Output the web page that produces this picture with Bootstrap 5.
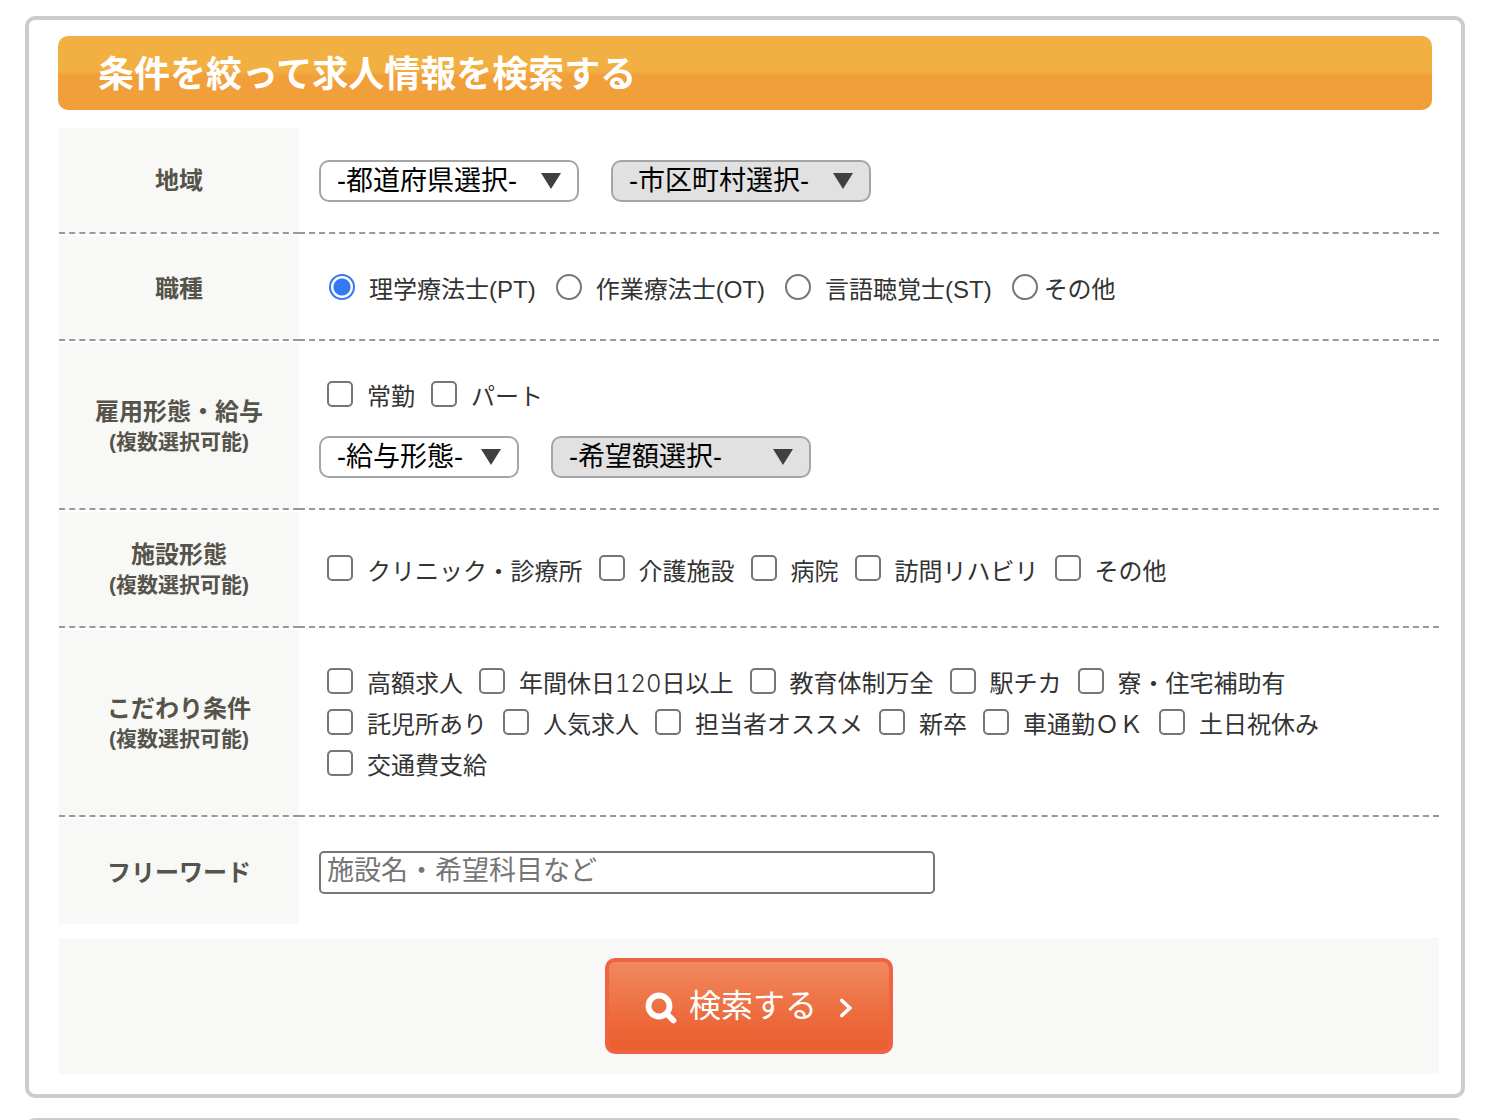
<!DOCTYPE html>
<html lang="ja">
<head>
<meta charset="utf-8">
<meta name="viewport" content="width=device-width, initial-scale=1">
<title>求人情報検索</title>
<link href="https://cdn.jsdelivr.net/npm/bootstrap@5.3.0/dist/css/bootstrap.min.css" rel="stylesheet">
<style>
  body { font-family: "Liberation Sans", "Noto Sans CJK JP", sans-serif; font-size: 24px; color: #333; background: #fff; }
  .page { height: 100vh; padding: 16px 27px 0 25px; gap: 20px; }
  .panel { border: 4px solid #ccc; border-radius: 10px; }
  .panel-search { padding: 16px 22px 20px 30px; }
  .panel-title { margin: 0 7px 18px -1px; padding: 3px 40px 0; font-size: 36px; line-height: 71px; border-radius: 10px;
    background: linear-gradient(#f3b042 0 46%, #f19f3a 54%); }
  .texture { background: repeating-conic-gradient(#f6f6f4 0 25%, #fafaf8 0 50%) 0 0 / 4px 4px; }
  .cond-list { gap: 2px; }
  .cond-tall { min-height: 116px; }
  .cond:not(:last-child) > * { border-bottom: 2px dashed #999; }
  .cond-head { width: 240px; padding-top: 2px; font-size: 24px; line-height: 30px; color: #55534a; }
  .cond-head small { font-size: 21px; font-weight: 700; }
  .cond-body { padding: 32px 20px 30px; }
  .cond-body-choices { padding: 30px 20px 32px; }
  .cond-body-mixed { padding: 30px 20px; gap: 22px; }
  .select-pair { gap: 32px; }
  .choices { column-gap: 16px; padding-left: 8px; }
  .choices-radio { column-gap: 20px; padding-left: 10px; }
  .choice { gap: 14px; line-height: 41px; }
  .choice-tight { gap: 6px; }
  .choice .form-check-input { width: 26px; height: 26px; margin: 0; border: 2px solid #767676; background-color: #fff; }
  .choice .form-check-input[type=checkbox] { border-radius: 5px; }
  .choice .form-check-input[type=radio]:checked { border-color: #3478f6; background-image: radial-gradient(circle, #3478f6 0 8px, #fff 9px); }
  .choice label { padding-top: 3px; margin-bottom: -3px; }
  .num { font-family: Inter, sans-serif; font-weight: 300; font-variant-numeric: tabular-nums; }
  .cond-select { width: 260px; height: 42px; padding: 0 50px 0 16px; font-size: 27px; line-height: 36px; color: #000;
    border: 2px solid #a5a5a5; border-radius: 10px;
    background: #fff url("data:image/svg+xml,%3Csvg xmlns='http://www.w3.org/2000/svg' viewBox='0 0 20 16'%3E%3Cpath d='M0 0h20L10 16z' fill='%23404040'/%3E%3C/svg%3E") no-repeat right 16px center / 20px 16px; }
  .cond-select:disabled { background-color: #e1e1e1; color: #000; opacity: 1; }
  .cond-select-sm { width: 200px; padding-right: 40px; }
  .keyword { width: 616px; height: 43px; padding: 0 6px 2px; font-size: 27px; line-height: 36px; border: 2px solid #767676; border-radius: 5px; }
  .keyword::placeholder { color: #757575; opacity: 1; }
  .submit-area { margin-top: 14px; padding: 20px; }
  .btn-search { width: 288px; height: 96px; font-size: 32px; color: #fff; border: 4px solid #ee6245; border-radius: 10px;
    background: linear-gradient(#f0895d, #ec6335 80%, #ea5f30); }
  .btn-search:hover { color: #fff; border-color: #ee6245; }
  .btn-search span { margin: 0 22px 0 12px; line-height: 48px; }
  .btn-search svg { margin-top: 3px; }
</style>
<script src="https://cdn.jsdelivr.net/npm/bootstrap@5.3.0/dist/js/bootstrap.bundle.min.js"></script>
</head>
<body>
<main class="page d-flex flex-column overflow-hidden">
  <form class="panel panel-search flex-shrink-0" onsubmit="return false">
    <h1 class="panel-title text-white fw-bold">条件を絞って求人情報を検索する</h1>

    <div class="cond-list d-flex flex-column">
      <div class="cond d-flex">
        <div class="cond-head texture fw-bold flex-shrink-0 d-flex flex-column align-items-center justify-content-center">地域</div>
        <div class="cond-body flex-grow-1 d-flex align-items-center">
          <div class="select-pair d-flex flex-wrap">
            <select class="form-select cond-select" aria-label="都道府県"><option>-都道府県選択-</option></select>
            <select class="form-select cond-select" aria-label="市区町村" disabled><option>-市区町村選択-</option></select>
          </div>
        </div>
      </div>

      <div class="cond d-flex" role="radiogroup" aria-labelledby="h-job">
        <div id="h-job" class="cond-head texture fw-bold flex-shrink-0 d-flex flex-column align-items-center justify-content-center">職種</div>
        <div class="cond-body-choices flex-grow-1 d-flex align-items-center">
          <div class="choices choices-radio d-flex flex-wrap">
            <div class="choice d-flex align-items-center"><input class="form-check-input" type="radio" name="job" id="j1" checked><label for="j1">理学療法士(PT)</label></div>
            <div class="choice d-flex align-items-center"><input class="form-check-input" type="radio" name="job" id="j2"><label for="j2">作業療法士(OT)</label></div>
            <div class="choice d-flex align-items-center"><input class="form-check-input" type="radio" name="job" id="j3"><label for="j3">言語聴覚士(ST)</label></div>
            <div class="choice choice-tight d-flex align-items-center"><input class="form-check-input" type="radio" name="job" id="j4"><label for="j4">その他</label></div>
          </div>
        </div>
      </div>

      <div class="cond d-flex" role="group" aria-labelledby="h-emp">
        <div id="h-emp" class="cond-head texture fw-bold flex-shrink-0 d-flex flex-column align-items-center justify-content-center">雇用形態・給与<small>(複数選択可能)</small></div>
        <div class="cond-body-mixed flex-grow-1 d-flex flex-column justify-content-center">
          <div class="choices d-flex flex-wrap">
            <div class="choice d-flex align-items-center"><input class="form-check-input" type="checkbox" id="e1"><label for="e1">常勤</label></div>
            <div class="choice d-flex align-items-center"><input class="form-check-input" type="checkbox" id="e2"><label for="e2">パート</label></div>
          </div>
          <div class="select-pair d-flex flex-wrap">
            <select class="form-select cond-select cond-select-sm" aria-label="給与形態"><option>-給与形態-</option></select>
            <select class="form-select cond-select" aria-label="希望額" disabled><option>-希望額選択-</option></select>
          </div>
        </div>
      </div>

      <div class="cond cond-tall d-flex" role="group" aria-labelledby="h-fac">
        <div id="h-fac" class="cond-head texture fw-bold flex-shrink-0 d-flex flex-column align-items-center justify-content-center">施設形態<small>(複数選択可能)</small></div>
        <div class="cond-body-choices flex-grow-1 d-flex align-items-center">
          <div class="choices d-flex flex-wrap">
            <div class="choice d-flex align-items-center"><input class="form-check-input" type="checkbox" id="f1"><label for="f1">クリニック・診療所</label></div>
            <div class="choice d-flex align-items-center"><input class="form-check-input" type="checkbox" id="f2"><label for="f2">介護施設</label></div>
            <div class="choice d-flex align-items-center"><input class="form-check-input" type="checkbox" id="f3"><label for="f3">病院</label></div>
            <div class="choice d-flex align-items-center"><input class="form-check-input" type="checkbox" id="f4"><label for="f4">訪問リハビリ</label></div>
            <div class="choice d-flex align-items-center"><input class="form-check-input" type="checkbox" id="f5"><label for="f5">その他</label></div>
          </div>
        </div>
      </div>

      <div class="cond d-flex" role="group" aria-labelledby="h-opt">
        <div id="h-opt" class="cond-head texture fw-bold flex-shrink-0 d-flex flex-column align-items-center justify-content-center">こだわり条件<small>(複数選択可能)</small></div>
        <div class="cond-body-choices flex-grow-1 d-flex align-items-center">
          <div class="choices d-flex flex-wrap">
            <div class="choice d-flex align-items-center"><input class="form-check-input" type="checkbox" id="o1"><label for="o1">高額求人</label></div>
            <div class="choice d-flex align-items-center"><input class="form-check-input" type="checkbox" id="o2"><label for="o2">年間休日<span class="num">120</span>日以上</label></div>
            <div class="choice d-flex align-items-center"><input class="form-check-input" type="checkbox" id="o3"><label for="o3">教育体制万全</label></div>
            <div class="choice d-flex align-items-center"><input class="form-check-input" type="checkbox" id="o4"><label for="o4">駅チカ</label></div>
            <div class="choice d-flex align-items-center"><input class="form-check-input" type="checkbox" id="o5"><label for="o5">寮・住宅補助有</label></div>
            <div class="choice d-flex align-items-center"><input class="form-check-input" type="checkbox" id="o6"><label for="o6">託児所あり</label></div>
            <div class="choice d-flex align-items-center"><input class="form-check-input" type="checkbox" id="o7"><label for="o7">人気求人</label></div>
            <div class="choice d-flex align-items-center"><input class="form-check-input" type="checkbox" id="o8"><label for="o8">担当者オススメ</label></div>
            <div class="choice d-flex align-items-center"><input class="form-check-input" type="checkbox" id="o9"><label for="o9">新卒</label></div>
            <div class="choice d-flex align-items-center"><input class="form-check-input" type="checkbox" id="o10"><label for="o10">車通勤ＯＫ</label></div>
            <div class="choice d-flex align-items-center"><input class="form-check-input" type="checkbox" id="o11"><label for="o11">土日祝休み</label></div>
            <div class="choice d-flex align-items-center"><input class="form-check-input" type="checkbox" id="o12"><label for="o12">交通費支給</label></div>
          </div>
        </div>
      </div>

      <div class="cond d-flex">
        <label for="keyword" class="cond-head texture fw-bold flex-shrink-0 d-flex flex-column align-items-center justify-content-center">フリーワード</label>
        <div class="cond-body flex-grow-1 d-flex align-items-center">
          <input type="text" class="form-control keyword" id="keyword" placeholder="施設名・希望科目など">
        </div>
      </div>
    </div>

    <div class="submit-area texture d-flex justify-content-center">
      <button type="submit" class="btn btn-search d-flex align-items-center justify-content-center p-0">
        <svg width="32" height="32" viewBox="0 0 32 32" fill="none" stroke="#fff" stroke-linecap="round" aria-hidden="true"><circle cx="14" cy="14" r="10.5" stroke-width="5.8"/><path d="M22 22l6.500 6.500" stroke-width="5.8"/></svg>
        <span>検索する</span>
        <svg width="14" height="20" viewBox="0 0 14 20" fill="none" stroke="#fff" stroke-width="3.600" stroke-linecap="round" aria-hidden="true"><path d="M2.800 2.500l8 7.500-8 7.500"/></svg>
      </button>
    </div>
  </form>
  <section class="panel flex-grow-1 flex-shrink-0 pb-5"></section>
</main>
</body>
</html>
